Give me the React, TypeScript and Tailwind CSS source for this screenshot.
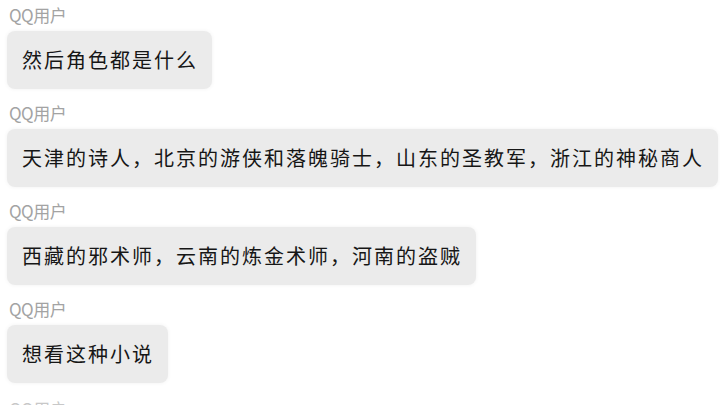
import React from "react";

const msgs = [
  "然后角色都是什么",
  "天津的诗人，北京的游侠和落魄骑士，山东的圣教军，浙江的神秘商人",
  "西藏的邪术师，云南的炼金术师，河南的盗贼",
  "想看这种小说",
];

export default function App() {
  return (
    <div
      className="w-[720px] h-[405px] overflow-hidden bg-white pl-[7px] pt-[5px] flex flex-col"
      style={{ fontFamily: '"Noto Sans CJK SC", "Noto Sans", sans-serif' }}
    >
      {msgs.map((m, i) => (
        <div key={i} className="flex flex-col items-start mb-[14px]">
          <div className="h-[20px] leading-[20px] text-[17px] text-[#a3a3a3] pl-[2px] tracking-[-0.5px]">
            QQ用户
          </div>
          <div className="mt-[6px] h-[58px] flex items-center rounded-[8px] bg-[#ebebeb] pl-[15px] pr-[14px] text-[20px] tracking-[2px] text-[#161616] shadow-[0_0_4px_rgba(0,0,0,0.06)]">
            {m}
          </div>
        </div>
      ))}
      <div className="h-[20px] leading-[20px] text-[17px] text-[#c8c8c8] pl-[2px] tracking-[-0.5px] mt-[2px]">
        QQ用户
      </div>
    </div>
  );
}
